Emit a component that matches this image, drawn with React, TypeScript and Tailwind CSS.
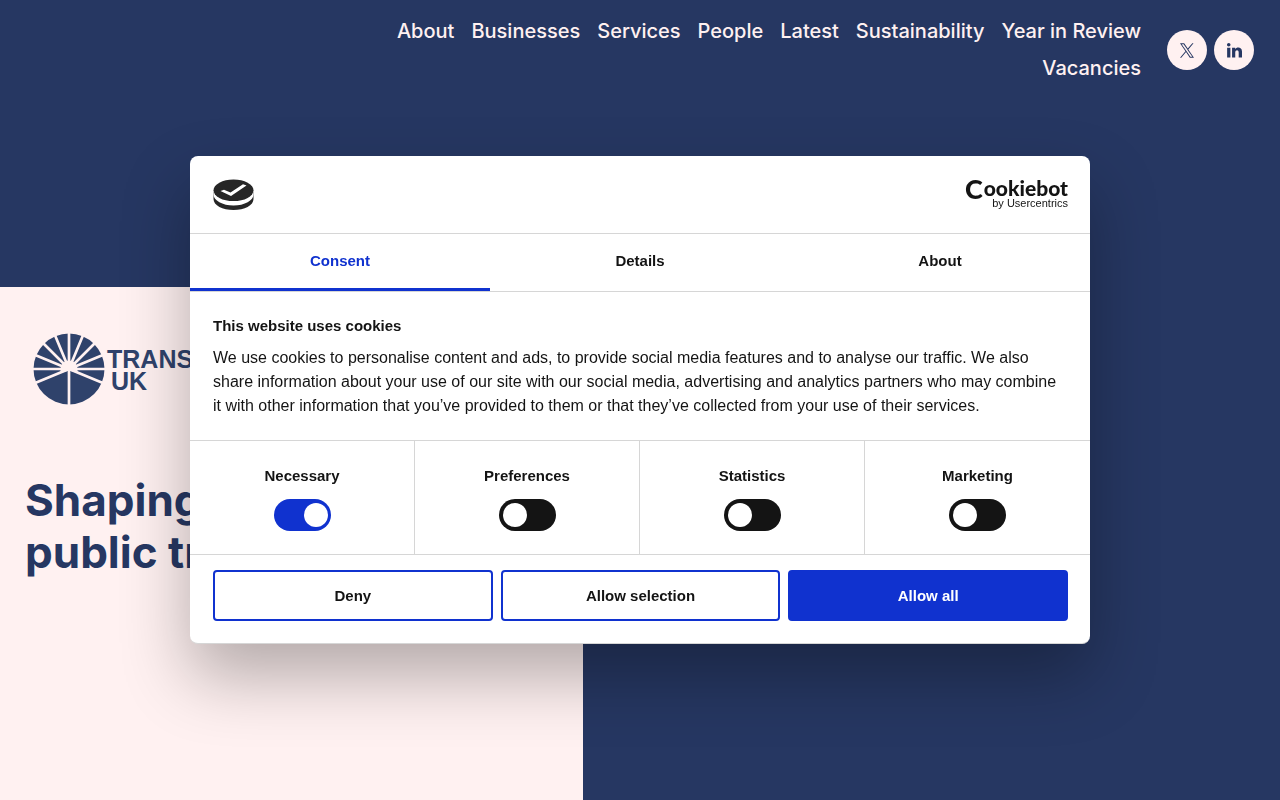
const navItems = [
  "About",
  "Businesses",
  "Services",
  "People",
  "Latest",
  "Sustainability",
  "Year in Review",
  "Vacancies",
];

const tabs = ["Consent", "Details", "About"];

const categories = [
  { id: "necessary", label: "Necessary", on: true },
  { id: "preferences", label: "Preferences", on: false },
  { id: "statistics", label: "Statistics", on: false },
  { id: "marketing", label: "Marketing", on: false },
];

function XLogo() {
  return (
    <svg viewBox="0 0 1200 1227" className="h-[15px] w-[14px]" fill="currentColor" aria-hidden="true">
      <path d="M714.163 519.284L1160.89 0H1055.03L667.137 450.887L357.328 0H0L468.492 681.821L0 1226.37H105.866L515.491 750.218L842.672 1226.37H1200L714.137 519.284H714.163ZM569.165 687.828L521.697 619.934L144.011 79.6944H306.615L611.412 515.685L658.88 583.579L1055.08 1150.3H892.476L569.165 687.854V687.828Z" />
    </svg>
  );
}

function LinkedInLogo() {
  return (
    <svg viewBox="0 0 24 24" className="size-[15px]" fill="currentColor" aria-hidden="true">
      <path d="M5.600 2.800C5.600 4.300 4.300 5.600 2.800 5.600S0 4.300 0 2.800 1.300 0 2.800 0 5.600 1.300 5.600 2.800zM5.400 7.500H.2V23h5.200V7.500zM13 7.500H8.100V23H13.200v-7.700c0-4.500 5.500-4.900 5.500 0V23h5.300V13.400c0-7.600-8.900-7.400-11-3.700V7.500z" />
    </svg>
  );
}

function WheelLogo() {
  return (
    <svg viewBox="-36 -36 72 72" className="size-[72px] shrink-0" aria-hidden="true">
      <circle r="35.5" fill="#2f426b" />
      <g stroke="#fff1f1" strokeWidth="2.7">
        <path d="M0-36V36M-36 0H36" />
        <path d="M0 0L-13.8-33.3M0 0L13.8-33.3" />
        <path d="M0 0L-25.5-25.5M0 0L25.5-25.5" />
        <path d="M0 0L-33.3-13.8M0 0L33.3-13.8" />
        <path d="M0 0L-33.3 13.8M0 0L33.3 13.8" />
      </g>
      <path d="M-8.5 4V0A8.5 8.5 0 1 1 8.5 0V4L0 1.5Z" fill="#fff1f1" />
    </svg>
  );
}

function CookieMark() {
  return (
    <svg viewBox="0 0 41 32" className="h-8 w-[41px]" aria-hidden="true">
      <path d="M.5 13V20C.5 26.500 9.500 31 20.500 31S40.500 26.500 40.500 20V13Z" fill="#262626" />
      <path d="M.5 12V15.500C.5 21.500 9.500 26.500 20.500 26.500S40.500 21.500 40.500 15.500V12Z" fill="#fff" />
      <ellipse cx="20.500" cy="11.300" rx="20" ry="10.800" fill="#262626" />
      <path d="M7.500 12L11 10.800L17.500 13.400L30 5.200L33.500 6.600L18 17Z" fill="#fff" />
    </svg>
  );
}

function CookiebotLogo() {
  return (
    <svg
      viewBox="0 0 102 32"
      className="h-8 w-[102px] overflow-visible"
      fill="#141414"
      role="img"
      aria-label="Cookiebot by Usercentrics"
    >
      <g fontFamily="Lato, sans-serif" fontWeight="900">
        <text x="-1" y="20" fontSize="27">
          C
        </text>
        <text x="102" y="17" fontSize="21" textAnchor="end">
          ookiebot
        </text>
      </g>
      <text x="102" y="28" fontSize="11" fontFamily="'Liberation Sans', sans-serif" textAnchor="end">
        by Usercentrics
      </text>
    </svg>
  );
}

export default function App() {
  return (
    <div className="flex min-h-screen flex-col bg-[#263762] font-['Inter',sans-serif]">
      <header className="flex items-center justify-end gap-[26px] px-[26px] pt-[13px]">
        <nav className="flex max-w-[760px] flex-wrap justify-end gap-x-[17px]">
          {navItems.map((item) => (
            <a key={item} href="#" className="text-[20px] leading-[37px] font-medium text-[#fff1f1]">
              {item}
            </a>
          ))}
        </nav>
        <div className="flex gap-[7px]">
          <a href="#" aria-label="X" className="flex size-10 items-center justify-center rounded-full bg-[#fff1f1] text-[#263762]">
            <XLogo />
          </a>
          <a href="#" aria-label="LinkedIn" className="flex size-10 items-center justify-center rounded-full bg-[#fff1f1] text-[#263762]">
            <LinkedInLogo />
          </a>
        </div>
      </header>

      <main className="mt-[200px] flex grow">
        <section className="w-[583px] bg-[#fff1f1] px-[25px] pt-[46px]">
          <div className="flex gap-[2px] pl-2">
            <WheelLogo />
            <p className="pt-[15px] font-['Liberation_Sans',sans-serif] text-[25px] leading-[22px] font-bold text-[#2f426b]">
              TRANSPORT
              <br />
              <span className="pl-1">UK</span>
            </p>
          </div>
          <h1 className="mt-[69px] text-[44px] leading-[52px] font-bold text-[#263762]">
            Shaping the future of
            <br />
            public transport
          </h1>
        </section>
      </main>

      <div className="fixed inset-0 flex items-center justify-center">
        <div
          role="dialog"
          aria-labelledby="cookie-title"
          className="w-full max-w-[900px] overflow-hidden rounded-lg border-b border-[#d6d6d6] bg-white font-['Liberation_Sans',sans-serif] text-[15px] text-[#141414] shadow-[0_32px_68px_rgba(0,0,0,0.3)]"
        >
          <div className="flex h-[78px] items-center justify-between border-b border-[#d6d6d6] pr-[22px] pl-[23px]">
            <CookieMark />
            <CookiebotLogo />
          </div>

          <div role="tablist" className="grid grid-cols-3 border-b border-[#d6d6d6]">
            {tabs.map((tab, i) => (
              <button
                key={tab}
                role="tab"
                aria-selected={i === 0}
                className={
                  i === 0
                    ? "h-[57px] border-b-[3px] border-[#1032cf] font-bold text-[#1032cf]"
                    : "h-[57px] border-b-[3px] border-transparent font-bold"
                }
              >
                {tab}
              </button>
            ))}
          </div>

          <div className="py-[22px] pr-[22px] pl-[23px]">
            <h2 id="cookie-title" className="leading-6 font-bold">
              This website uses cookies
            </h2>
            <p className="mt-2 text-base leading-6">
              We use cookies to personalise content and ads, to provide social media features and to analyse our traffic. We also
              share information about your use of our site with our social media, advertising and analytics partners who may combine
              it with other information that you’ve provided to them or that they’ve collected from your use of their services.
            </p>
          </div>

          <div className="grid grid-cols-4 divide-x divide-[#d6d6d6] border-y border-[#d6d6d6]">
            {categories.map((c) => (
              <div key={c.id} className="flex flex-col items-center pt-[23px] pb-[23px]">
                <label htmlFor={c.id} className="leading-6 font-bold">
                  {c.label}
                </label>
                <input
                  id={c.id}
                  type="checkbox"
                  role="switch"
                  defaultChecked={c.on}
                  className="mt-[11px] h-8 w-[57px] appearance-none rounded-full bg-[#141414] p-1 before:block before:size-6 before:rounded-full before:bg-white checked:bg-[#1032cf] checked:before:translate-x-[26px]"
                />
              </div>
            ))}
          </div>

          <div className="grid grid-cols-3 gap-2 pt-[15px] pr-[22px] pb-[22px] pl-[23px] font-bold">
            <button className="h-[51px] rounded border-2 border-[#1032cf] pt-0.5">Deny</button>
            <button className="h-[51px] rounded border-2 border-[#1032cf] pt-0.5">Allow selection</button>
            <button className="h-[51px] rounded border-2 border-[#1032cf] bg-[#1032cf] pt-0.5 text-white">Allow all</button>
          </div>
        </div>
      </div>
    </div>
  );
}
